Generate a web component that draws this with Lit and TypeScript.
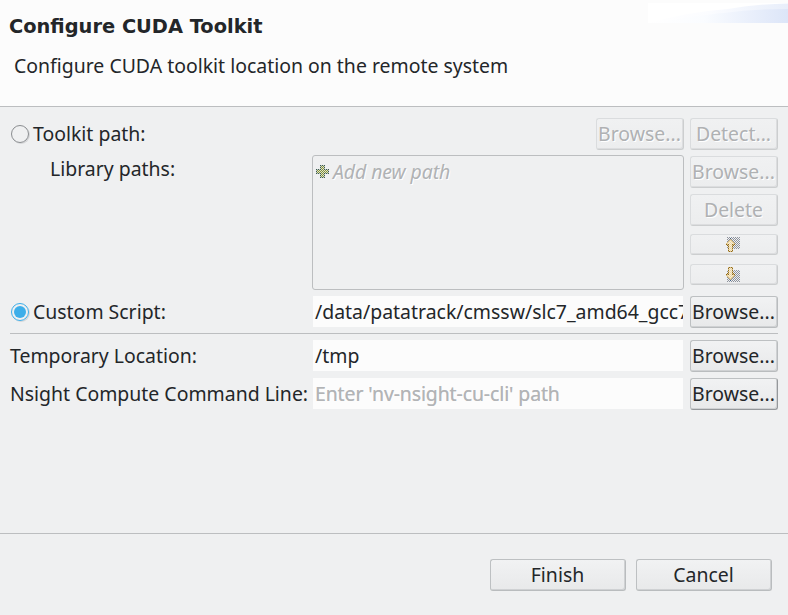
import { LitElement, html, css, svg } from "lit";
import { customElement, property } from "lit/decorators.js";

@customElement("push-button")
class PushButton extends LitElement {
  @property({ type: Boolean, reflect: true }) disabled = false;
  @property({ type: Boolean, reflect: true }) focused = false;
  static styles = css`
    :host { display: block; height: 32px; box-sizing: border-box; }
    .face {
      box-sizing: border-box; width: 100%; height: 100%; padding-right: 1px;
      display: flex; align-items: center; justify-content: center;
      border: 1px solid #bdc0c2; border-right-color: #b9bcbe; border-bottom-color: #b9bcbe;
      border-radius: 3px; color: #232629; white-space: nowrap;
      background: linear-gradient(#f1f2f3, #e8e9ea);
      box-shadow: inset -1px -1px 0 #cfd1d3;
    }
    :host([focused]) .face { border-right-color: #95989b; border-bottom-color: #95989b; }
    :host([disabled]) .face {
      color: #afb1b3; text-shadow: 1px 1px 0 #fff;
      border-color: #dadcde #cccecf #cccecf #dadcde;
      background: linear-gradient(#f0f1f2, #ecedee);
      box-shadow: inset -1px -1px 0 #dcdddf;
    }
  `;
  render() {
    return html`<div class="face"><slot></slot></div>`;
  }
}

const patterns = svg`<defs>
  <pattern id="c" width="2" height="2" patternUnits="userSpaceOnUse">
    <rect width="1" height="1" fill="#8d929c"/><rect x="1" y="1" width="1" height="1" fill="#8d929c"/>
  </pattern>
  <pattern id="o" width="2" height="2" patternUnits="userSpaceOnUse">
    <rect width="2" height="2" fill="#d9c08a"/>
    <rect width="1" height="1" fill="#8f6a1c"/><rect x="1" y="1" width="1" height="1" fill="#8f6a1c"/>
  </pattern>
  <pattern id="f" width="2" height="2" patternUnits="userSpaceOnUse">
    <rect width="2" height="2" fill="#f1ecdf"/>
    <rect width="1" height="1" fill="#f1d69a"/><rect x="1" y="1" width="1" height="1" fill="#f1d69a"/>
  </pattern>
</defs>`;

const upArrow = html`<svg class="arrow" width="15" height="17" shape-rendering="crispEdges">${patterns}
  <rect x="1" y="1" width="13" height="12" fill="url(#c)"/>
  <path d="M4 3h1v1h1v1h1v1h1v1h1v2h-1v1h-1v6h-5v-6h-1v-1h-1v-2h1v-1h1v-1h1v-1h1z" fill="url(#o)"/>
  <path d="M4 4h1v1h1v1h1v1h1v1h-2v7h-3v-7h-2v-1h1v-1h1v-1h1z" fill="url(#f)"/>
  <rect x="4" y="2" width="1" height="1" fill="#3d5f86"/></svg>`;
const downArrow = html`<svg class="arrow" width="15" height="17" shape-rendering="crispEdges">${patterns}
  <rect x="1" y="4" width="13" height="12" fill="url(#c)"/>
  <path d="M2 1h5v6h1v1h1v2h-1v1h-1v1h-1v1h-1v1h-1v-1h-1v-1h-1v-1h-1v-1h-1v-2h1v-1h1z" fill="url(#o)"/>
  <path d="M3 2h3v7h2v1h-1v1h-1v1h-1v1h-1v-1h-1v-1h-1v-1h-1v-1h2z" fill="url(#f)"/>
  <rect x="4" y="14" width="1" height="1" fill="#3d5f86"/></svg>`;

@customElement("app-root")
class AppRoot extends LitElement {
  static styles = css`
    :host {
      display: flex; flex-direction: column; width: 788px; height: 615px; overflow: hidden;
      background: #eff0f1; color: #232629; font: 19.46px/28px "Noto Sans", sans-serif;
    }
    .header {
      height: 107px; box-sizing: border-box; flex: none; background: #fcfcfc;
      border-bottom: 1px solid #bcbec0; display: flex; justify-content: space-between;
    }
    .title { font: bold 19.4px/28px "DejaVu Sans", sans-serif; margin: 13px 0 0 9px; white-space: nowrap; }
    .sub { margin: 11px 0 0 14px; white-space: nowrap; }
    .banner { margin-top: 3px; width: 140px; height: 20px; flex: none; }
    .body { flex: 1; padding: 11px 10px 0; }
    .row { display: flex; height: 32px; align-items: center; }
    .label { width: 302px; flex: none; white-space: nowrap; display: flex; align-items: center; }
    .radio {
      width: 18px; height: 18px; box-sizing: border-box; border: 1px solid #8a8d90; border-radius: 50%;
      margin: 0 4px 0 1px; box-shadow: 1px 1px 0 #d6d7d9; display: flex; align-items: center; justify-content: center;
    }
    .radio.on { border-color: #3daee9; }
    .radio.on::after { content: ""; width: 12px; height: 12px; border-radius: 50%; background: #3daee9; }
    .small { width: 88px; flex: none; }
    .spacer { flex: 1; }
    .gap { margin-right: 6px; }
    .libs { display: flex; margin-top: 5px; height: 135px; }
    .libs .label { align-items: flex-start; padding-left: 40px; box-sizing: border-box; }
    .list {
      width: 372px; height: 135px; box-sizing: border-box; border: 1px solid #bcbec0; border-radius: 3px;
      margin-right: 6px; padding: 2px 0 0 3px; display: flex; align-items: flex-start; letter-spacing: -0.08px;
      color: #b0b2b4; font-style: italic; text-shadow: 1px 1px 0 #fff; flex: none;
    }
    .plus { margin: 7px 4px 0 0; flex: none; }
    .stack { display: flex; flex-direction: column; gap: 6px; padding-top: 1px; }
    .thin { height: 21px; margin-top: 2px; }
    .thin + .thin { margin-top: 3px; }
    .arrow { display: block; }
    .field {
      width: 370px; height: 31px; margin: 0 7px 0 1px; background: #fcfcfc; overflow: hidden; flex: none;
      align-self: flex-start; white-space: nowrap; box-sizing: border-box; padding-left: 2px; line-height: 31px;
    }
    .hint { color: #b2b4b6; letter-spacing: -0.1px; text-shadow: 0 0 0.5px #c4c5c7; }
    .custom { margin-top: 6px; }
    .rule { height: 1px; background: #bcbec0; margin: 5px 0 6px; }
    .last { margin-top: 6px; }
    .footer {
      height: 82px; box-sizing: border-box; flex: none; border-top: 1px solid #bcbec0;
      display: flex; justify-content: flex-end; gap: 10px; padding: 25px 16px 0 0;
    }
    .wide { width: 136px; }
  `;
  render() {
    return html`
      <div class="header">
        <div>
          <div class="title">Configure CUDA Toolkit</div>
          <div class="sub">Configure CUDA toolkit location on the remote system</div>
        </div>
        <svg class="banner" viewBox="0 0 140 20">
          <defs>
            <linearGradient id="a" gradientUnits="userSpaceOnUse" x1="0" y1="0" x2="140" y2="0"><stop offset="0" stop-color="#fff"/><stop offset=".45" stop-color="#fbfcff"/><stop offset="1" stop-color="#e8eefa"/></linearGradient>
            <linearGradient id="b" gradientUnits="userSpaceOnUse" x1="0" y1="0" x2="140" y2="0"><stop offset="0" stop-color="#fff"/><stop offset=".4" stop-color="#fafcff"/><stop offset="1" stop-color="#dce5f8"/></linearGradient>
          </defs>
          <rect width="140" height="20" fill="#fff"/>
          <path d="M0 20Q40 9 80 6Q110 1 140 .5V20Z" fill="url(#a)"/>
          <path d="M5 20Q50 12 76 10Q105 6 140 6V20Z" fill="url(#b)"/>
        </svg>
      </div>
      <div class="body">
        <div class="row">
          <div class="label"><span class="radio"></span>Toolkit path:</div>
          <div class="spacer"></div>
          <push-button class="small gap" disabled>Browse...</push-button>
          <push-button class="small" disabled>Detect...</push-button>
        </div>
        <div class="libs">
          <div class="label">Library paths:</div>
          <div class="list">
            <svg class="plus" width="13" height="13" shape-rendering="crispEdges">
              <defs>
                <pattern id="p" width="2" height="2" patternUnits="userSpaceOnUse"><rect width="2" height="2" fill="#c3cdc6"/><rect width="1" height="1" fill="#3c5a50"/><rect x="1" y="1" width="1" height="1" fill="#3c5a50"/></pattern>
                <pattern id="q" width="2" height="2" patternUnits="userSpaceOnUse"><rect width="2" height="2" fill="#dfe2cb"/><rect width="1" height="1" fill="#84923c"/><rect x="1" y="1" width="1" height="1" fill="#84923c"/></pattern>
              </defs>
              <path d="M4 0h5v4h4v5h-4v4h-5v-4h-4v-5h4z" fill="url(#p)"/>
              <path d="M5 1h3v4h4v3h-4v4h-3v-4h-4v-3h4z" fill="url(#q)"/>
            </svg>
            <span>Add new path</span>
          </div>
          <div class="stack">
            <push-button class="small" disabled>Browse...</push-button>
            <push-button class="small" disabled>Delete</push-button>
            <push-button class="small thin" disabled>${upArrow}</push-button>
            <push-button class="small thin" disabled>${downArrow}</push-button>
          </div>
        </div>
        <div class="row custom">
          <div class="label"><span class="radio on"></span>Custom Script:</div>
          <div class="field">/data/patatrack/cmssw/slc7_amd64_gcc7</div>
          <push-button class="small">Browse...</push-button>
        </div>
        <div class="rule"></div>
        <div class="row">
          <div class="label">Temporary Location:</div>
          <div class="field">/tmp</div>
          <push-button class="small">Browse...</push-button>
        </div>
        <div class="row last">
          <div class="label">Nsight Compute Command Line:</div>
          <div class="field hint">Enter 'nv-nsight-cu-cli' path</div>
          <push-button class="small" focused>Browse...</push-button>
        </div>
      </div>
      <div class="footer">
        <push-button class="wide">Finish</push-button>
        <push-button class="wide">Cancel</push-button>
      </div>
    `;
  }
}
